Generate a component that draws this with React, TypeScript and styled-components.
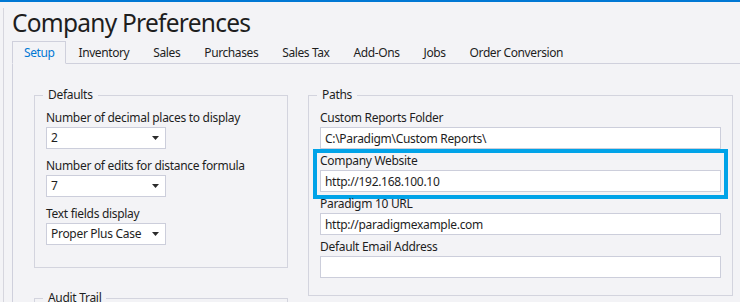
import styled, { createGlobalStyle } from 'styled-components'

const GlobalStyle = createGlobalStyle`
  html, body {
    margin: 0;
    padding: 0;
    background: #f3f3f6;
  }
  body {
    font-family: 'Noto Sans', 'Open Sans', sans-serif;
    font-size: 12px;
    letter-spacing: -0.3px;
    color: #1e1e1e;
  }
  * {
    box-sizing: border-box;
  }
`

const Page = styled.div`
  height: 302px;
  overflow: hidden;
  border-top: 2px solid #0078d4;
  padding-left: 3px;
`

const Window = styled.div`
  height: 100%;
  border-left: 1px solid #d6d6de;
  padding-left: 8px;
`

const Title = styled.h1`
  margin: 6px 0 0;
  font-size: 24.5px;
  line-height: 30px;
  font-weight: 400;
  letter-spacing: -0.75px;
  color: #1e1e1e;
`

const TabStrip = styled.div`
  display: flex;
  align-items: flex-end;
  height: 23px;
  margin-top: 3px;
  border-bottom: 1px solid #cfd0dc;
`

const Tab = styled.div<{ $active?: boolean }>`
  height: ${(p) => (p.$active ? '23px' : '22px')};
  padding: ${(p) => (p.$active ? '3px 11px 0' : '4px 12px 0')};
  line-height: 16px;
  letter-spacing: -0.4px;
  color: ${(p) => (p.$active ? '#0078d4' : '#1e1e1e')};
  background: #f3f3f6;
  border: ${(p) => (p.$active ? '1px solid #cfd0dc' : 'none')};
  border-bottom: ${(p) => (p.$active ? '1px solid #f3f3f6' : 'none')};
  margin-bottom: ${(p) => (p.$active ? '-1px' : '0')};
`

const Panel = styled.div`
  height: 100%;
  border-left: 1px solid #cfd0dc;
  padding: 23px 0 0 21px;
`

const Columns = styled.div`
  display: grid;
  grid-template-columns: 254px 425px;
  column-gap: 20px;
  align-items: start;
`

const Stack = styled.div`
  display: flex;
  flex-direction: column;
  gap: 22px;
`

const Group = styled.fieldset<{ $height: number }>`
  margin: 0;
  height: ${(p) => p.$height}px;
  padding: 7px 11px 0;
  border: 1px solid #d3d4de;
  min-width: 0;
`

const Legend = styled.legend`
  margin-left: -3px;
  padding: 0 5px;
  line-height: 16px;
  color: #1e1e1e;
`

const FieldList = styled.div<{ $gap: number }>`
  display: flex;
  flex-direction: column;
  gap: ${(p) => p.$gap}px;
`

const Field = styled.div`
  display: flex;
  flex-direction: column;
  gap: 1px;
`

const Label = styled.div`
  line-height: 16px;
  color: #1e1e1e;
  white-space: nowrap;
`

const Combo = styled.div`
  display: flex;
  align-items: center;
  justify-content: space-between;
  width: 120px;
  height: 22px;
  padding: 0 6px 0 4px;
  background: #fff;
  border: 1px solid #cccedb;
  line-height: 16px;
`

const TextBox = styled.input`
  display: block;
  width: 100%;
  height: 22px;
  margin: 0;
  padding: 0 4px;
  background: #fff;
  border: 1px solid #cccedb;
  border-radius: 0;
  outline: none;
  font: inherit;
  letter-spacing: inherit;
  line-height: 16px;
  color: #1e1e1e;
`

const Highlight = styled.div`
  margin: -4px -7px -7px;
  padding: 0 3px 3px;
  border: 4px solid #00a3e8;
`

const Arrow = () => (
  <svg width="7" height="4" viewBox="0 0 7 4">
    <path d="M0 0h7L3.5 4z" fill="#2b2b2b" />
  </svg>
)

const tabs = ['Setup', 'Inventory', 'Sales', 'Purchases', 'Sales Tax', 'Add-Ons', 'Jobs', 'Order Conversion']

const defaults = [
  { label: 'Number of decimal places to display', value: '2' },
  { label: 'Number of edits for distance formula', value: '7' },
  { label: 'Text fields display', value: 'Proper Plus Case' }
]

const paths = [
  { label: 'Custom Reports Folder', value: 'C:\\Paradigm\\Custom Reports\\' },
  { label: 'Company Website', value: 'http://192.168.100.10', marked: true },
  { label: 'Paradigm 10 URL', value: 'http://paradigmexample.com' },
  { label: 'Default Email Address', value: '' }
]

const App: React.FC = () => {
  return (
    <>
      <GlobalStyle />
      <Page>
        <Window>
          <Title>Company Preferences</Title>
          <TabStrip>
            {tabs.map((t, i) => (
              <Tab key={t} $active={i === 0}>
                {t}
              </Tab>
            ))}
          </TabStrip>
          <Panel>
            <Columns>
              <Stack>
                <Group $height={181}>
                  <Legend>Defaults</Legend>
                  <FieldList $gap={9}>
                    {defaults.map((d) => (
                      <Field key={d.label}>
                        <Label>{d.label}</Label>
                        <Combo>
                          <span>{d.value}</span>
                          <Arrow />
                        </Combo>
                      </Field>
                    ))}
                  </FieldList>
                </Group>
                <Group $height={120}>
                  <Legend>Audit Trail</Legend>
                </Group>
              </Stack>
              <Group $height={209}>
                <Legend>Paths</Legend>
                <FieldList $gap={4}>
                  {paths.map((p) => {
                    const field = (
                      <Field key={p.label}>
                        <Label>{p.label}</Label>
                        <TextBox readOnly value={p.value} />
                      </Field>
                    )
                    return p.marked ? <Highlight key={p.label}>{field}</Highlight> : field
                  })}
                </FieldList>
              </Group>
            </Columns>
          </Panel>
        </Window>
      </Page>
    </>
  )
}

export default App
